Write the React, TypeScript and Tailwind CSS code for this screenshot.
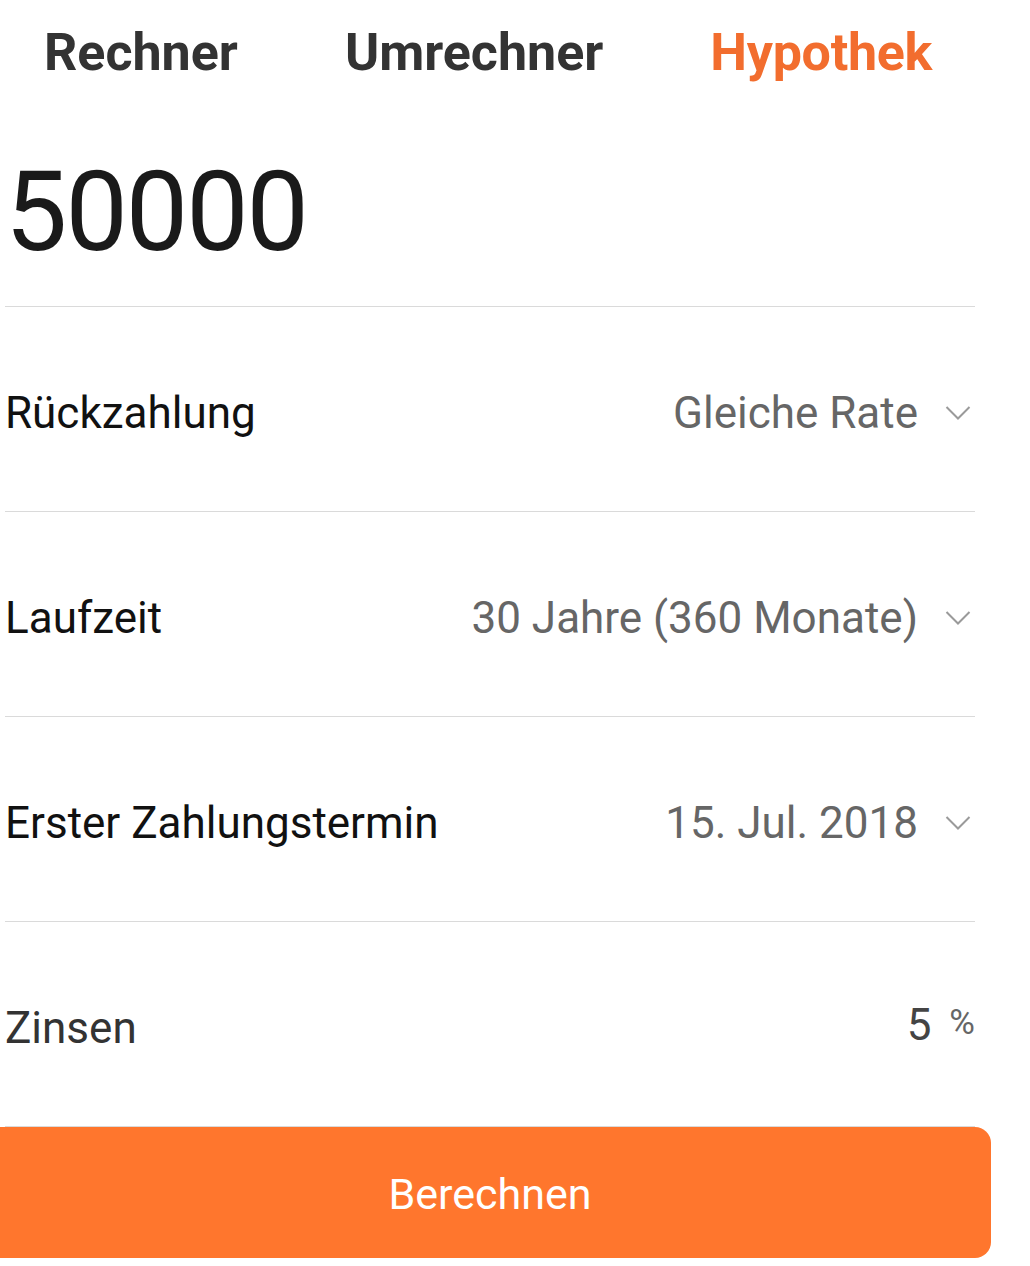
import React from 'react';

const Chevron = () => (
  <svg width="26" height="16" viewBox="0 0 26 16" className="shrink-0">
    <path d="M1.5 2 L13 13.5 L24.5 2" fill="none" stroke="#9a9a9a" strokeWidth="2" />
  </svg>
);

interface RowProps {
  label: string;
  value: string;
}

const SelectRow: React.FC<RowProps> = ({ label, value }) => (
  <div className="h-[205px] flex items-center justify-between border-b border-[#dadada] pt-[8px]">
    <span className="text-[44px] text-[#111]">{label}</span>
    <div className="flex items-center gap-[27px] pr-[4px]">
      <span className="text-[44px] text-[#666]">{value}</span>
      <Chevron />
    </div>
  </div>
);

export default function App() {
  return (
    <div
      className="w-[1030px] h-[1266px] bg-white overflow-hidden"
      style={{ fontFamily: 'Roboto, "Noto Sans", sans-serif' }}
    >
      <div className="h-[108px] flex items-center pl-[44px] pb-[2px]">
        <span className="text-[52px] font-bold text-[#333] leading-none">Rechner</span>
        <span className="ml-[107px] text-[52px] font-bold text-[#333] leading-none">Umrechner</span>
        <span className="ml-[107px] text-[52px] font-bold text-[#f26d2e] leading-none tracking-[-0.3px]">
          Hypothek
        </span>
      </div>

      <div className="ml-[5px] w-[970px]">
        <div className="h-[199px] flex items-center border-b border-[#dadada] pt-[10px]">
          <span className="text-[111px] tracking-[-2px] text-[#1a1a1a] leading-none">50000</span>
        </div>

        <SelectRow label="Rückzahlung" value="Gleiche Rate" />
        <SelectRow label="Laufzeit" value="30 Jahre (360 Monate)" />
        <SelectRow label="Erster Zahlungstermin" value="15. Jul. 2018" />

        <div className="h-[205px] flex items-center justify-between border-b border-[#dadada] pt-[8px]">
          <span className="text-[44px] text-[#333]">Zinsen</span>
          <div className="flex items-center gap-[18px] pb-[6px]">
            <span className="text-[44px] text-[#444]">5</span>
            <span className="text-[35px] text-[#666] pb-[4px]">%</span>
          </div>
        </div>
      </div>

      <button className="w-[991px] h-[131px] bg-[#ff762d] rounded-r-[16px] flex items-center justify-center pr-[11px] pt-[4px]">
        <span className="text-[43px] text-white">Berechnen</span>
      </button>
    </div>
  );
}
